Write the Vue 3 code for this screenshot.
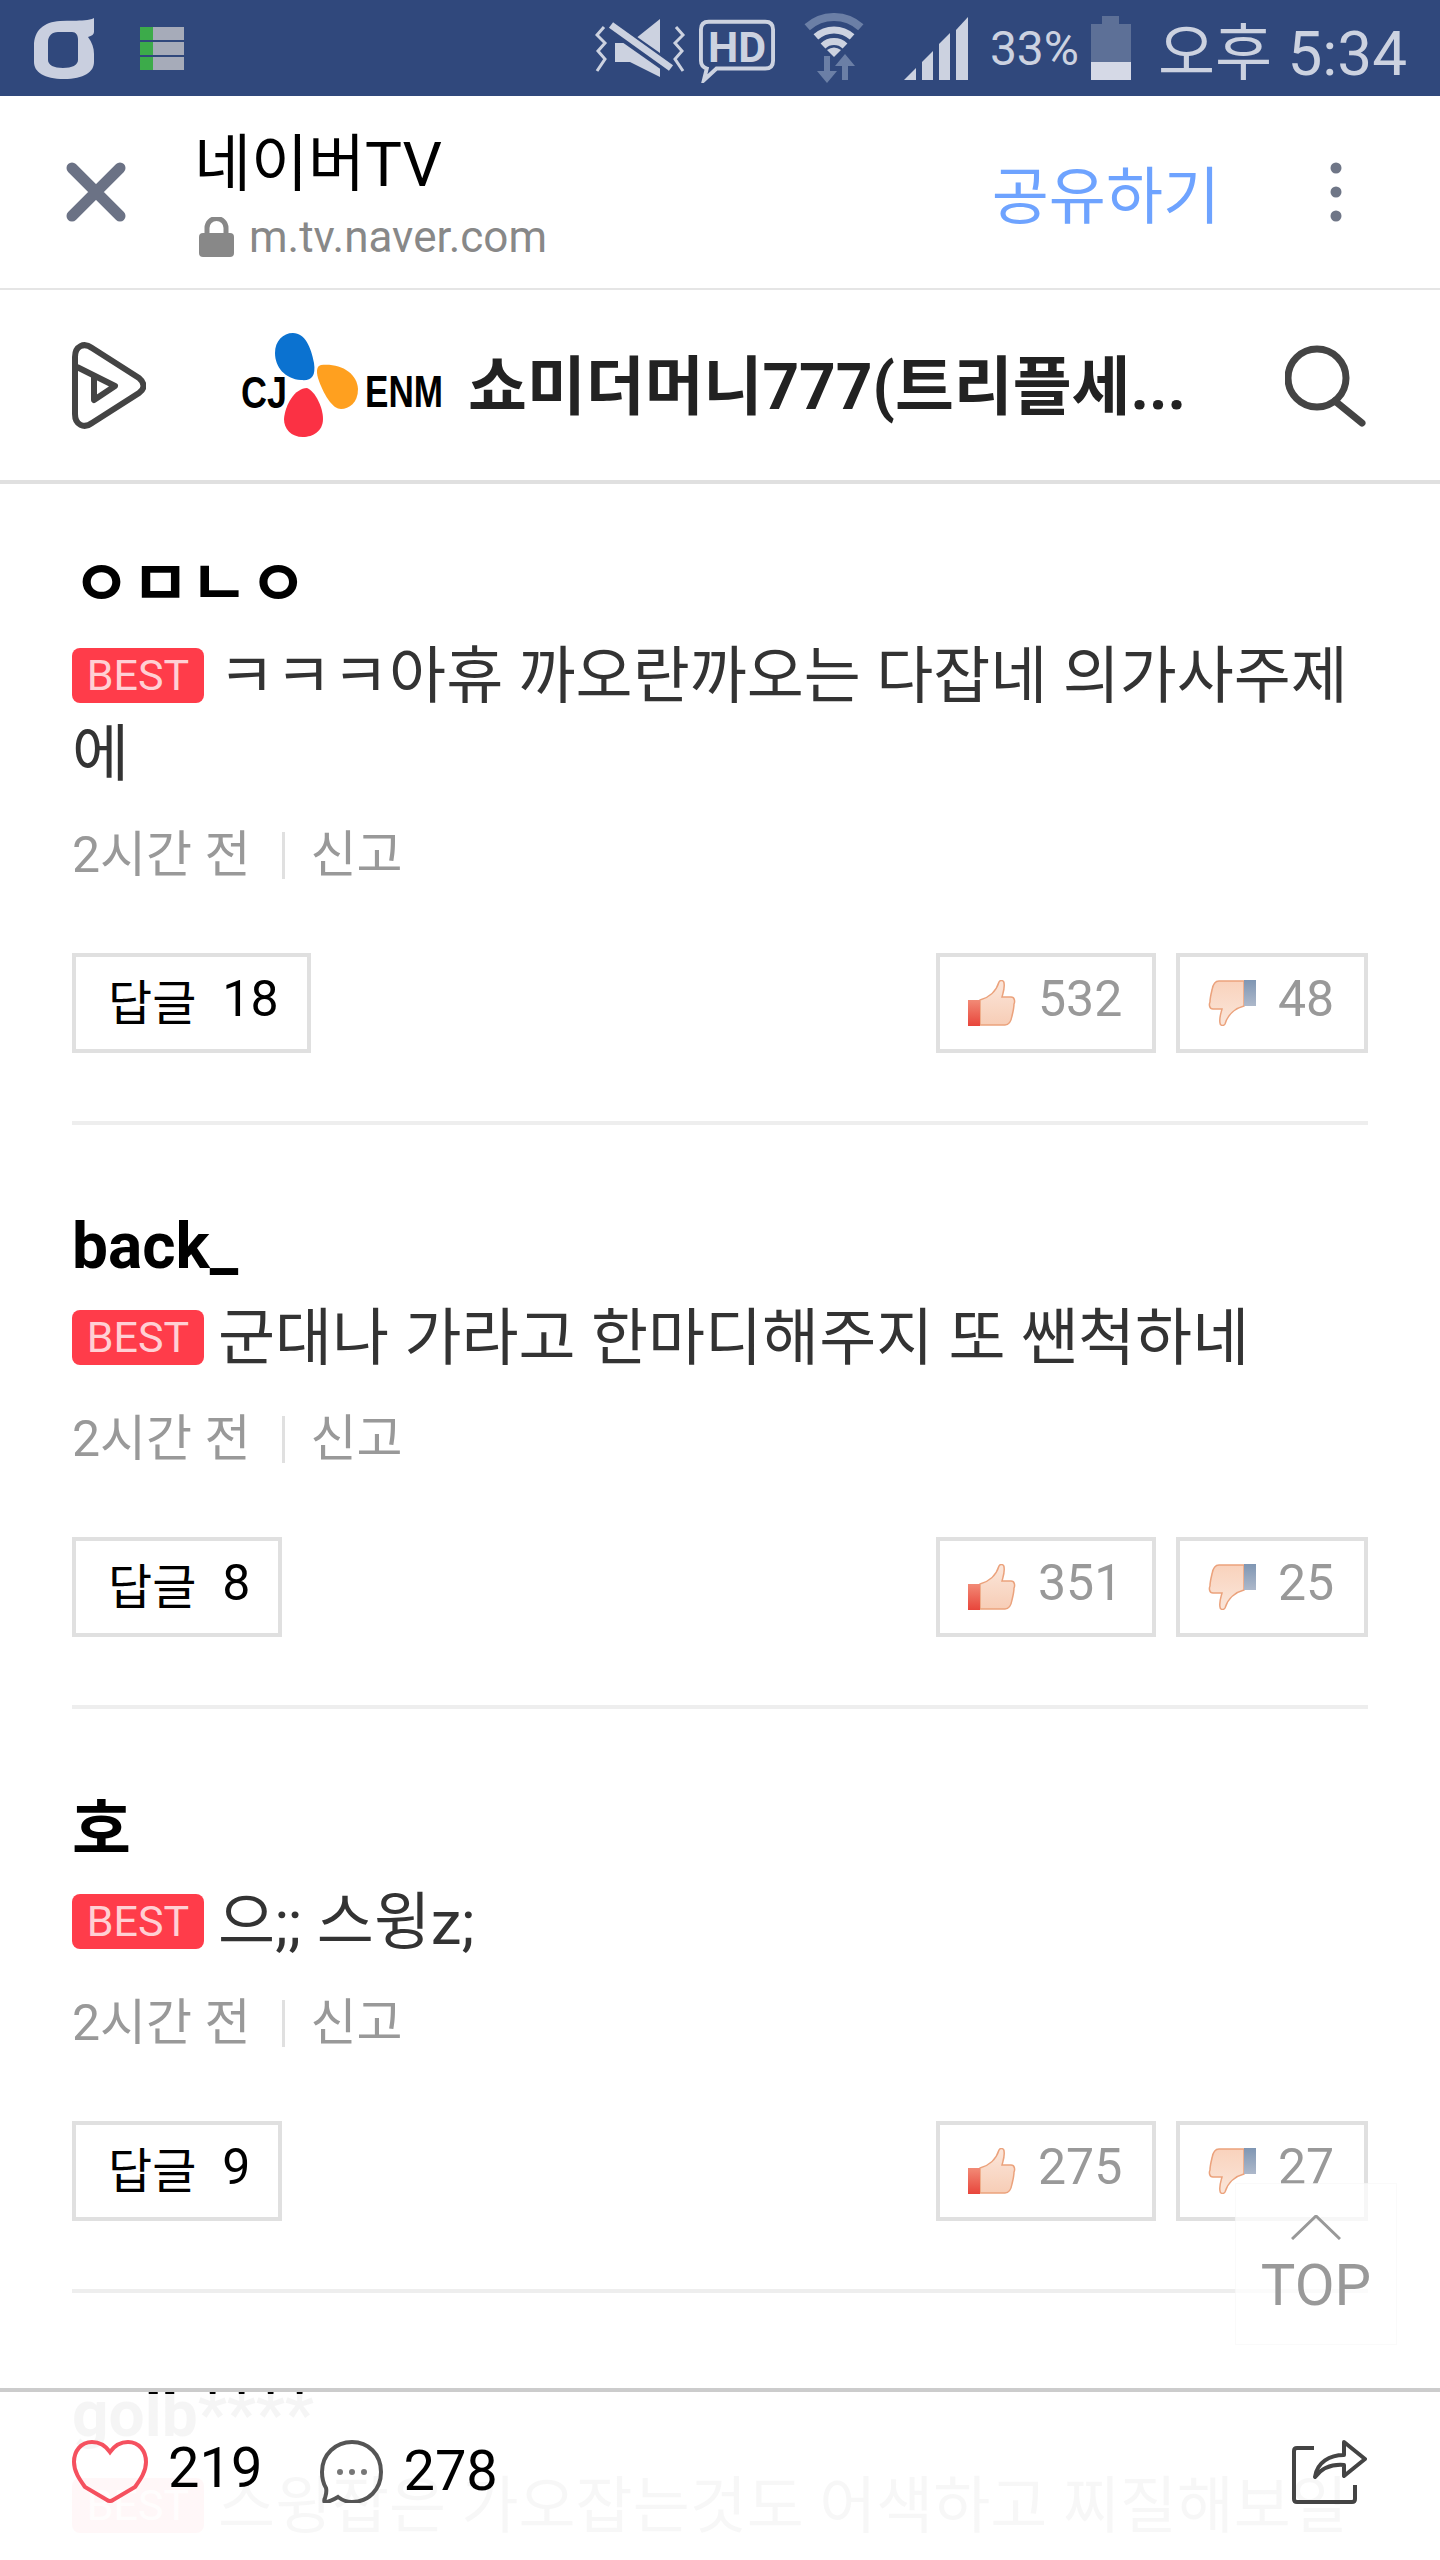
<script setup>
const comments = [
  { id: 1, name: 'ㅇㅁㄴㅇ', text: 'ㅋㅋㅋ아휴 까오란까오는 다잡네 의가사주제에', replies: 18, up: 532, down: 48 },
  { id: 2, name: 'back_', text: '군대나 가라고 한마디해주지 또 쌘척하네', replies: 8, up: 351, down: 25 },
  { id: 3, name: '호', text: '으;; 스윙z;', replies: 9, up: 275, down: 27 },
  { id: 4, name: 'golb****', text: '스윙잡은 가오잡는것도 어색하고 찌질해보일' },
]
</script>

<template>
  <div class="page">
    <svg class="defs" width="0" height="0">
      <defs>
        <linearGradient id="hand" x1="0" y1="0" x2="0" y2="1">
          <stop offset="0" stop-color="#fbe6da" />
          <stop offset="1" stop-color="#f7cdb6" />
        </linearGradient>
        <linearGradient id="handDown" x1="0" y1="1" x2="0" y2="0">
          <stop offset="0" stop-color="#f9d2bc" />
          <stop offset="1" stop-color="#fae6da" />
        </linearGradient>
        <linearGradient id="cuffRed" x1="0" y1="0" x2="0" y2="1">
          <stop offset="0" stop-color="#f28a76" />
          <stop offset="1" stop-color="#e8453b" />
        </linearGradient>
        <linearGradient id="cuffBlue" x1="0" y1="0" x2="0" y2="1">
          <stop offset="0" stop-color="#7f96b3" />
          <stop offset="1" stop-color="#adb8ca" />
        </linearGradient>
      </defs>
    </svg>

    <div class="status">
      <svg class="s-logo" width="60" height="61" viewBox="0 0 60 61">
        <path fill="#c9cfdf" fill-rule="evenodd" d="M60 0 L60 14 C60 16 58 18 54 19 C58 24 60 30 60 36 L60 44 C60 54 50 61 30 61 C10 61 0 54 0 44 L0 28 C0 12 10 4 26 3 C40 2 52 4 60 0 Z M24 14 L38 14 C42 14 44 17 44 22 L44 42 C44 47 38 50 29 50 C20 50 14 47 14 42 L14 24 C14 18 18 14 24 14 Z" />
      </svg>
      <svg class="s-sd" width="44" height="43" viewBox="0 0 44 43">
        <g v-for="y in [0, 15, 30]" :key="y">
          <rect :y="y" width="44" height="13" fill="#a6abb9" />
          <rect :y="y" width="13" height="13" fill="#3cab4a" />
        </g>
      </svg>
      <div class="s-space"></div>
      <svg class="s-mute" width="91" height="58" viewBox="0 0 91 58">
        <polygon fill="#ccd2e0" points="20,24 35,24 65,0 65,58 35,43 20,43" />
        <line x1="14" y1="6" x2="78" y2="51" stroke="#30487c" stroke-width="13" />
        <line x1="16" y1="6" x2="76" y2="49" stroke="#ccd2e0" stroke-width="7" />
        <polyline fill="none" stroke="#ccd2e0" stroke-width="3" points="9,8 2,16 10,24 3,32 10,40 2,52" />
        <polyline fill="none" stroke="#ccd2e0" stroke-width="3" points="81,8 88,16 80,24 87,32 80,40 88,52" />
      </svg>
      <svg class="s-hd" width="76" height="64" viewBox="0 0 78 64">
        <path fill="none" stroke="#ccd2e0" stroke-width="4" d="M10 2 L68 2 Q76 2 76 10 L76 42 Q76 50 68 50 L18 50 L5 62 L8 50 Q2 48 2 42 L2 10 Q2 2 10 2 Z" />
        <text x="39" y="43" text-anchor="middle" class="hd-text">HD</text>
      </svg>
      <svg class="s-wifi" width="68" height="70" viewBox="0 0 66 70">
        <path fill="none" stroke="#6b7fa6" stroke-width="8" d="M6.2 14.3 A40 40 0 0 1 59.8 14.3" />
        <path fill="none" stroke="#ccd2e0" stroke-width="7" d="M14.9 23.9 A27 27 0 0 1 51.1 23.9" />
        <path fill="none" stroke="#ccd2e0" stroke-width="7" d="M22 33 A16 16 0 0 1 44 33" />
        <path fill="#ccd2e0" d="M33 44 L26 37 Q33 32 40 37 Z" />
        <path fill="#6b7fa6" d="M23 43 L29 43 L29 58 L36 58 L26 70 L16 58 L23 58 Z" />
        <path fill="#6b7fa6" d="M44 41 L54 53 L47 53 L47 67 L41 67 L41 53 L34 53 Z" />
      </svg>
      <svg class="s-signal" width="65" height="63" viewBox="0 0 65 63">
        <g fill="#ccd2e0">
          <polygon points="0,63 12,51 12,63" />
          <polygon points="18,63 18,45 29,34 29,63" />
          <polygon points="35,63 35,27 46,16 46,63" />
          <polygon points="52,63 52,13 64,0 64,63" />
        </g>
      </svg>
      <span class="s-pct">33%</span>
      <svg class="s-batt" width="40" height="64" viewBox="0 0 40 64">
        <rect x="11" width="17" height="10" fill="#5d7097" />
        <rect y="8" width="40" height="38" fill="#5d7097" />
        <rect y="46" width="40" height="18" fill="#d5d9e6" />
      </svg>
      <span class="s-time">오후 5:34</span>
    </div>

    <header class="appbar">
      <svg class="close" width="60" height="60" viewBox="0 0 60 60">
        <path d="M6 6 L54 54 M54 6 L6 54" stroke="#6b7285" stroke-width="11" stroke-linecap="round" />
      </svg>
      <div class="site">
        <div class="site-name">네이버TV</div>
        <div class="site-url">
          <svg width="35" height="40" viewBox="0 0 35 40">
            <path d="M8 18 L8 11 A9.5 9.5 0 0 1 27 11 L27 18" fill="none" stroke="#888" stroke-width="5" />
            <rect y="16" width="35" height="24" rx="4" fill="#888" />
          </svg>
          <span>m.tv.naver.com</span>
        </div>
      </div>
      <a class="share">공유하기</a>
      <svg class="dots" width="12" height="60" viewBox="0 0 12 60">
        <circle cx="6" cy="6" r="5.5" fill="#6f7687" />
        <circle cx="6" cy="30" r="5.5" fill="#6f7687" />
        <circle cx="6" cy="54" r="5.5" fill="#6f7687" />
      </svg>
    </header>

    <nav class="nav">
      <svg width="74" height="87" viewBox="0 0 74 87">
        <path fill="none" stroke="#444" stroke-width="6" stroke-linejoin="round" d="M3 15 C3 4 12 0 20 6 L67 36 C73 41 73 47 67 51 L20 81 C12 87 3 83 3 72 Z" />
        <path fill="none" stroke="#444" stroke-width="6" stroke-linejoin="round" d="M5 25 L43 44 L22 58 L22 33" />
      </svg>
      <svg class="cj" width="202" height="104" viewBox="0 0 202 104">
        <path fill="#0b72d0" d="M52 0 C64 0 70 14 73 30 C75 44 70 48 60 47 C44 46 34 34 34 20 C34 8 42 0 52 0 Z" />
        <path fill="#ffa01f" d="M80 32 C100 30 116 40 117 56 C117 70 108 76 100 76 C92 76 84 64 78 48 C75 40 75 33 80 32 Z" />
        <path fill="#fb3144" d="M66 55 C74 58 82 74 82 86 C82 98 72 104 62 104 C50 104 43 96 43 86 C44 72 54 55 66 55 Z" />
        <text x="0" y="75" textLength="46" lengthAdjust="spacingAndGlyphs" class="cj-text">CJ</text>
        <text x="124" y="74" textLength="78" lengthAdjust="spacingAndGlyphs" class="cj-text">ENM</text>
      </svg>
      <h1 class="nav-title">쇼미더머니777(트리플세...</h1>
      <svg class="search" width="81" height="83" viewBox="0 0 81 83">
        <circle cx="32" cy="34" r="29" fill="none" stroke="#444" stroke-width="7" />
        <line x1="50" y1="57" x2="77" y2="79" stroke="#444" stroke-width="7" stroke-linecap="round" />
      </svg>
    </nav>

    <section v-for="c in comments" :key="c.id" class="comment">
      <div class="name">{{ c.name }}</div>
      <p class="text"><span class="best">BEST</span>{{ c.text }}</p>
      <template v-if="c.up">
        <div class="meta">
          <span>2시간 전</span>
          <i></i>
          <span>신고</span>
        </div>
        <div class="actions">
          <button class="btn reply"><span class="ko">답글</span><span>{{ c.replies }}</span></button>
          <button class="btn vote up">
            <svg width="48" height="46" viewBox="0 0 48 46">
              <path fill="url(#hand)" stroke="#eba27c" stroke-width="1.5" d="M12 20 C20 18 28 12 31 2 C32 0 36 0 36 3 C37 8 35 13 34 17 L43 17 C47 17 47 22 46 24 C46 28 45 32 44 36 C43 42 41 45 37 45 L12 45 Z" />
              <rect y="20" width="12" height="26" fill="url(#cuffRed)" />
            </svg>
            <span>{{ c.up }}</span>
          </button>
          <button class="btn vote down">
            <svg width="48" height="46" viewBox="0 0 48 46">
              <g transform="rotate(180 24 23)">
                <path fill="url(#handDown)" stroke="#eba27c" stroke-width="1.5" d="M12 20 C20 18 28 12 31 2 C32 0 36 0 36 3 C37 8 35 13 34 17 L43 17 C47 17 47 22 46 24 C46 28 45 32 44 36 C43 42 41 45 37 45 L12 45 Z" />
              </g>
              <rect x="36" y="0" width="12" height="26" fill="url(#cuffBlue)" />
            </svg>
            <span>{{ c.down }}</span>
          </button>
        </div>
      </template>
    </section>

    <div class="top">
      <svg width="50" height="25" viewBox="0 0 50 25">
        <polyline points="1,24 25,1 49,24" fill="none" stroke="#999" stroke-width="3" />
      </svg>
      <span>TOP</span>
    </div>

    <footer class="bar">
      <svg width="76" height="63" viewBox="0 0 76 63">
        <path fill="none" stroke="#f5515f" stroke-width="4" d="M38 12 C33 5 27 2 20 2 C9 2 2 11 2 22 C2 32 8 40 13 47 L35 60 Q38 62 41 60 L63 47 C68 40 74 32 74 22 C74 11 67 2 56 2 C49 2 43 5 38 12 Z" />
      </svg>
      <span class="count likes">219</span>
      <svg class="talk" width="63" height="63" viewBox="0 0 63 63">
        <path fill="none" stroke="#555" stroke-width="4" d="M32 2 C48 2 61 14 61 32 C61 50 48 62 32 62 C26 62 22 60 18 57 C13 60 9 62 5 62 C4 62 4 60 5 58 C6 54 7 52 6 48 C3 43 2 38 2 32 C2 14 16 2 32 2 Z" />
        <circle cx="20" cy="32" r="3" fill="#777" />
        <circle cx="32" cy="32" r="3" fill="#777" />
        <circle cx="44" cy="32" r="3" fill="#777" />
      </svg>
      <span class="count">278</span>
      <svg class="send" width="75" height="64" viewBox="0 0 75 64">
        <path fill="none" stroke="#444" stroke-width="4" stroke-linejoin="round" d="M22 8 L5 8 Q2 8 2 11 L2 59 Q2 62 5 62 L60 62 Q63 62 63 59 L63 45" />
        <path fill="none" stroke="#444" stroke-width="4" stroke-linejoin="round" d="M23 37 C25 22 38 15 52 15 L52 2 L73 19 L52 36 L52 25 C40 24 30 28 23 37 Z" />
      </svg>
    </footer>
  </div>
</template>

<style>
html, body {
  margin: 0;
  background: #fff;
}
</style>

<style scoped>
.page {
  position: relative;
  width: 1440px;
  height: 2560px;
  overflow: hidden;
  background: #fff;
  font-family: Roboto, "Noto Sans CJK KR", sans-serif;
}

.defs {
  position: absolute;
}

/* status bar */
.status {
  display: flex;
  align-items: center;
  height: 96px;
  padding: 0 33px 0 34px;
  background: #30487c;
  color: #ccd2e0;
}

.s-sd {
  margin-left: 46px;
}

.s-space {
  flex: 1;
}

.s-hd {
  margin-left: 13px;
  margin-top: 6px;
}

.hd-text {
  font-family: Roboto, sans-serif;
  font-weight: 700;
  font-size: 44px;
  fill: #ccd2e0;
}

.s-wifi {
  margin-left: 25px;
}

.s-signal {
  margin-left: 36px;
}

.s-pct {
  margin-left: 21px;
  font-size: 48px;
}

.s-batt {
  margin-left: 12px;
}

.s-time {
  margin-left: 27px;
  font-size: 62px;
  white-space: nowrap;
}

/* browser bar */
.appbar {
  display: flex;
  align-items: center;
  height: 192px;
  padding: 0 98px 0 66px;
  border-bottom: 2px solid #e5e5e5;
}

.site {
  align-self: flex-start;
  margin-left: 68px;
  padding-top: 33px;
}

.site-name {
  font-size: 62px;
  line-height: 72px;
  color: #000;
}

.site-url {
  display: flex;
  align-items: center;
  gap: 15px;
  margin-top: 11px;
  padding-left: 5px;
  font-size: 44px;
  line-height: 50px;
  color: #888;
}

.share {
  margin-left: auto;
  margin-right: 110px;
  font-size: 62px;
  color: #6ea3ff;
}

/* channel nav */
.nav {
  display: flex;
  align-items: center;
  height: 190px;
  padding: 0 74px 0 72px;
  border-bottom: 4px solid #e0e0e0;
}

.cj {
  margin-left: 95px;
}

.cj-text {
  font-family: "Liberation Sans", sans-serif;
  font-weight: 700;
  font-size: 44px;
  fill: #000;
}

.nav-title {
  margin: 0 0 8px 25px;
  font-size: 64px;
  font-weight: 700;
  color: #222;
  white-space: nowrap;
}

.search {
  margin-left: auto;
}

/* comments */
.comment {
  margin: 0 72px;
  padding: 83px 0 68px;
  border-bottom: 4px solid #eee;
}

.comment:first-of-type {
  padding-top: 62px;
}

.name {
  font-size: 64px;
  font-weight: 700;
  line-height: 78px;
  color: #000;
}

.text {
  margin: 14px 0 0;
  font-size: 62px;
  line-height: 78px;
  color: #333;
}

.best {
  display: inline-block;
  width: 132px;
  height: 55px;
  margin-right: 14px;
  border-radius: 8px;
  background: #ff3c4a;
  color: #ffd0d4;
  font-family: Roboto, sans-serif;
  font-size: 43px;
  line-height: 55px;
  text-align: center;
  vertical-align: 8px;
}

.meta {
  display: flex;
  align-items: center;
  margin-top: 31px;
  font-size: 50px;
  line-height: 60px;
  color: #999;
}

.meta i {
  width: 3px;
  height: 47px;
  margin: 0 26px 0 31px;
  background: #e0e0e0;
}

.actions {
  display: flex;
  gap: 20px;
  margin-top: 68px;
}

.btn {
  display: flex;
  align-items: center;
  box-sizing: border-box;
  height: 100px;
  padding: 0;
  border: 4px solid #e0e0e0;
  background: #fff;
  font-family: inherit;
  font-size: 50px;
  color: #999;
}

.reply {
  gap: 26px;
  margin-right: auto;
  padding: 0 28px 8px 32px;
  color: #000;
}

.reply .ko {
  font-size: 48px;
}

.vote {
  gap: 22px;
  padding: 0 0 0 28px;
}

.vote span {
  padding-bottom: 8px;
}

.up {
  width: 220px;
}

.down {
  width: 192px;
}

/* floating */
.top {
  position: absolute;
  left: 1235px;
  top: 2183px;
  box-sizing: border-box;
  display: flex;
  flex-direction: column;
  align-items: center;
  width: 162px;
  height: 162px;
  padding-top: 31px;
  border: 1px solid rgba(0, 0, 0, .02);
  background: rgba(255, 255, 255, .75);
  color: #999;
  font-size: 58px;
  line-height: 60px;
}

.top span {
  margin-top: 15px;
}

.bar {
  position: absolute;
  left: 0;
  right: 0;
  top: 2388px;
  bottom: 0;
  display: flex;
  align-items: flex-start;
  box-sizing: border-box;
  padding: 48px 73px 0 72px;
  border-top: 4px solid #ccc;
  background: linear-gradient(transparent 2px, rgba(255, 255, 255, .96) 2px);
  color: #000;
}

.count {
  margin-left: 20px;
  font-size: 56px;
  line-height: 63px;
}

.likes {
  margin-top: -3px;
}

.talk {
  margin-left: 58px;
}

.send {
  margin-left: auto;
}
</style>
